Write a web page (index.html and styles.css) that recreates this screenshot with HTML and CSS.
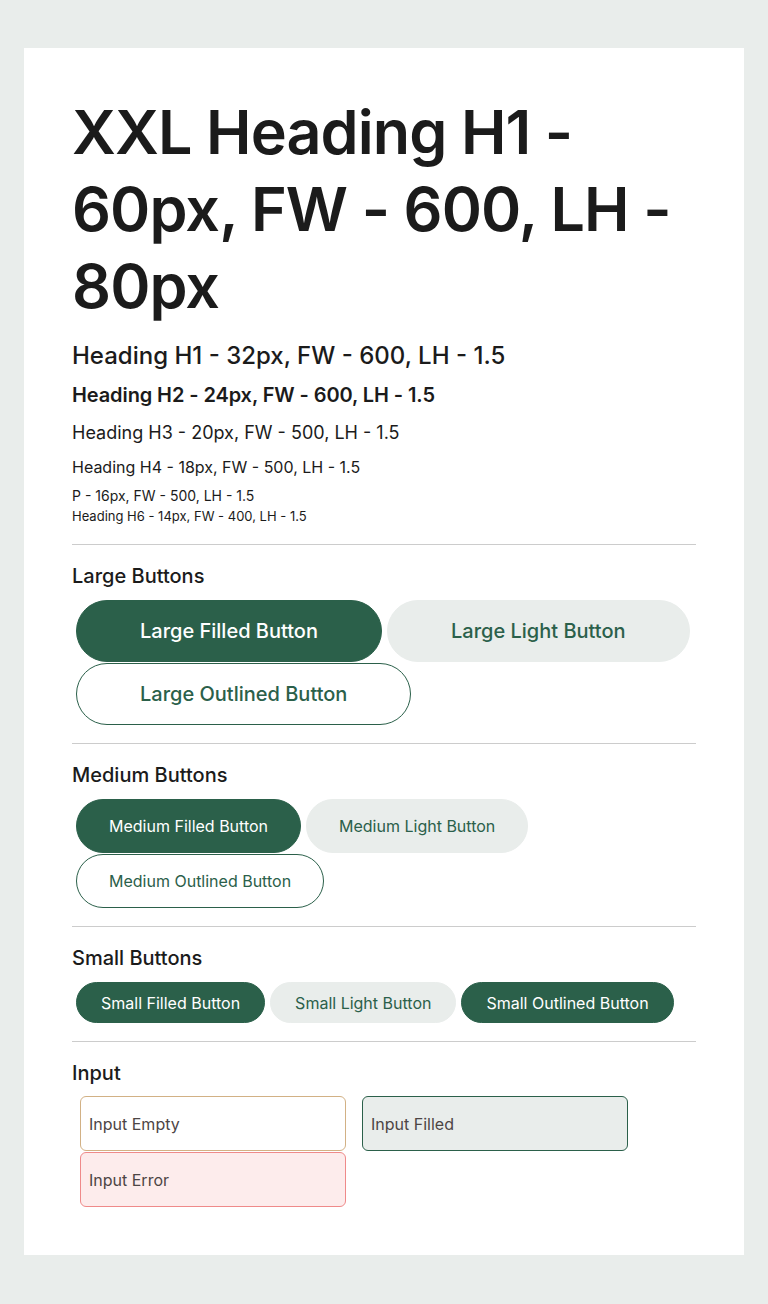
FILE: index.html
```html
<!DOCTYPE html>
<html lang="en">
<head>
<meta charset="utf-8">
<title>Typography & Components</title>
<link rel="stylesheet" href="styles.css">
</head>
<body>
<main class="card">
  <h1 class="xxl">XXL Heading H1 - 60px, FW - 600, LH - 80px</h1>
  <h1 class="h1">Heading H1 - 32px, FW - 600, LH - 1.5</h1>
  <h2 class="h2">Heading H2 - 24px, FW - 600, LH - 1.5</h2>
  <h3 class="h3">Heading H3 - 20px, FW - 500, LH - 1.5</h3>
  <h4 class="h4">Heading H4 - 18px, FW - 500, LH - 1.5</h4>
  <p class="p">P - 16px, FW - 500, LH - 1.5</p>
  <h6 class="h6">Heading H6 - 14px, FW - 400, LH - 1.5</h6>

  <section class="section">
    <h4 class="section-title">Large Buttons</h4>
    <div class="btn-row">
      <button class="btn btn-lg btn-filled">Large Filled Button</button>
      <button class="btn btn-lg btn-light">Large Light Button</button>
      <button class="btn btn-lg btn-outlined">Large Outlined Button</button>
    </div>
  </section>

  <section class="section">
    <h4 class="section-title">Medium Buttons</h4>
    <div class="btn-row">
      <button class="btn btn-md btn-filled">Medium Filled Button</button>
      <button class="btn btn-md btn-light">Medium Light Button</button>
      <button class="btn btn-md btn-outlined">Medium Outlined Button</button>
    </div>
  </section>

  <section class="section">
    <h4 class="section-title">Small Buttons</h4>
    <div class="btn-row">
      <button class="btn btn-sm btn-filled">Small Filled Button</button>
      <button class="btn btn-sm btn-light">Small Light Button</button>
      <button class="btn btn-sm btn-filled">Small Outlined Button</button>
    </div>
  </section>

  <section class="section">
    <h4 class="section-title">Input</h4>
    <div class="input-grid">
      <div class="input input-empty">Input Empty</div>
      <div class="input input-filled">Input Filled</div>
      <div class="input input-error">Input Error</div>
    </div>
  </section>
</main>
</body>
</html>
```
FILE: styles.css
```css
* { box-sizing: border-box; }

html, body {
  margin: 0;
  padding: 0;
}

body {
  background: #e9edeb;
  font-family: Inter, "Noto Sans", sans-serif;
  color: #1b1b1b;
  padding: 48px 24px;
}

.card {
  background: #ffffff;
  padding: 48px;
  display: flex;
  flex-direction: column;
}

h1, h2, h3, h4, h5, h6, p { margin: 0; }

.xxl {
  font-size: 61px;
  font-weight: 600;
  line-height: 77px;
  letter-spacing: -0.9px;
  margin-top: -2px;
}

.h1 {
  font-size: 24px;
  font-weight: 500;
  line-height: 31px;
  margin-top: 15px;
}

.h2 {
  font-size: 20px;
  font-weight: 600;
  line-height: 27px;
  letter-spacing: -0.1px;
  margin-top: 11px;
}

.h3 {
  font-size: 18px;
  font-weight: 400;
  line-height: 26px;
  margin-top: 11px;
}

.h4 {
  font-size: 16px;
  font-weight: 400;
  line-height: 22px;
  margin-top: 10px;
}

.p {
  font-size: 14px;
  font-weight: 400;
  line-height: 19px;
  margin-top: 8px;
}

.h6 {
  font-size: 13px;
  font-weight: 400;
  line-height: 18px;
  margin-top: 2px;
  margin-bottom: 1px;
}

.section {
  border-top: 1px solid #cccccc;
  margin-top: 18px;
  padding-top: 18px;
  display: flex;
  flex-direction: column;
}

.section-title {
  font-size: 20px;
  font-weight: 500;
  line-height: 27px;
  margin-bottom: 10px;
}

.btn-row {
  display: flex;
  flex-wrap: wrap;
  column-gap: 5px;
  row-gap: 1px;
  padding-left: 4px;
}

.btn {
  font-family: Inter, "Noto Sans", sans-serif;
  border-radius: 999px;
  border: 1px solid transparent;
  cursor: pointer;
  white-space: nowrap;
}

.btn-lg {
  height: 62px;
  padding: 0 63px;
  font-size: 20px;
  font-weight: 500;
}

.btn-md {
  height: 54px;
  padding: 0 32px;
  font-size: 16px;
  font-weight: 400;
}

.btn-sm {
  height: 41px;
  padding: 0 24px;
  font-size: 16px;
  font-weight: 400;
}

.btn-filled {
  background: #2b604a;
  border-color: #2b604a;
  color: #ffffff;
}

.btn-light {
  background: #e9edeb;
  border-color: #e9edeb;
  color: #2b604a;
}

.btn-outlined {
  background: #ffffff;
  border-color: #2b604a;
  color: #2b604a;
}

.input-grid {
  display: grid;
  grid-template-columns: 266px 266px;
  column-gap: 16px;
  row-gap: 1px;
  padding-left: 8px;
  margin-top: -1px;
}

.input {
  height: 55px;
  border-radius: 6px;
  border: 1px solid;
  padding: 0 8px;
  display: flex;
  align-items: center;
  font-size: 16px;
  color: #4d4545;
}

.input-empty {
  border-color: #d2b185;
  background: #ffffff;
}

.input-filled {
  border-color: #2b604a;
  background: #e9edeb;
}

.input-error {
  border-color: #ef8a8a;
  background: #fdecec;
}
```
